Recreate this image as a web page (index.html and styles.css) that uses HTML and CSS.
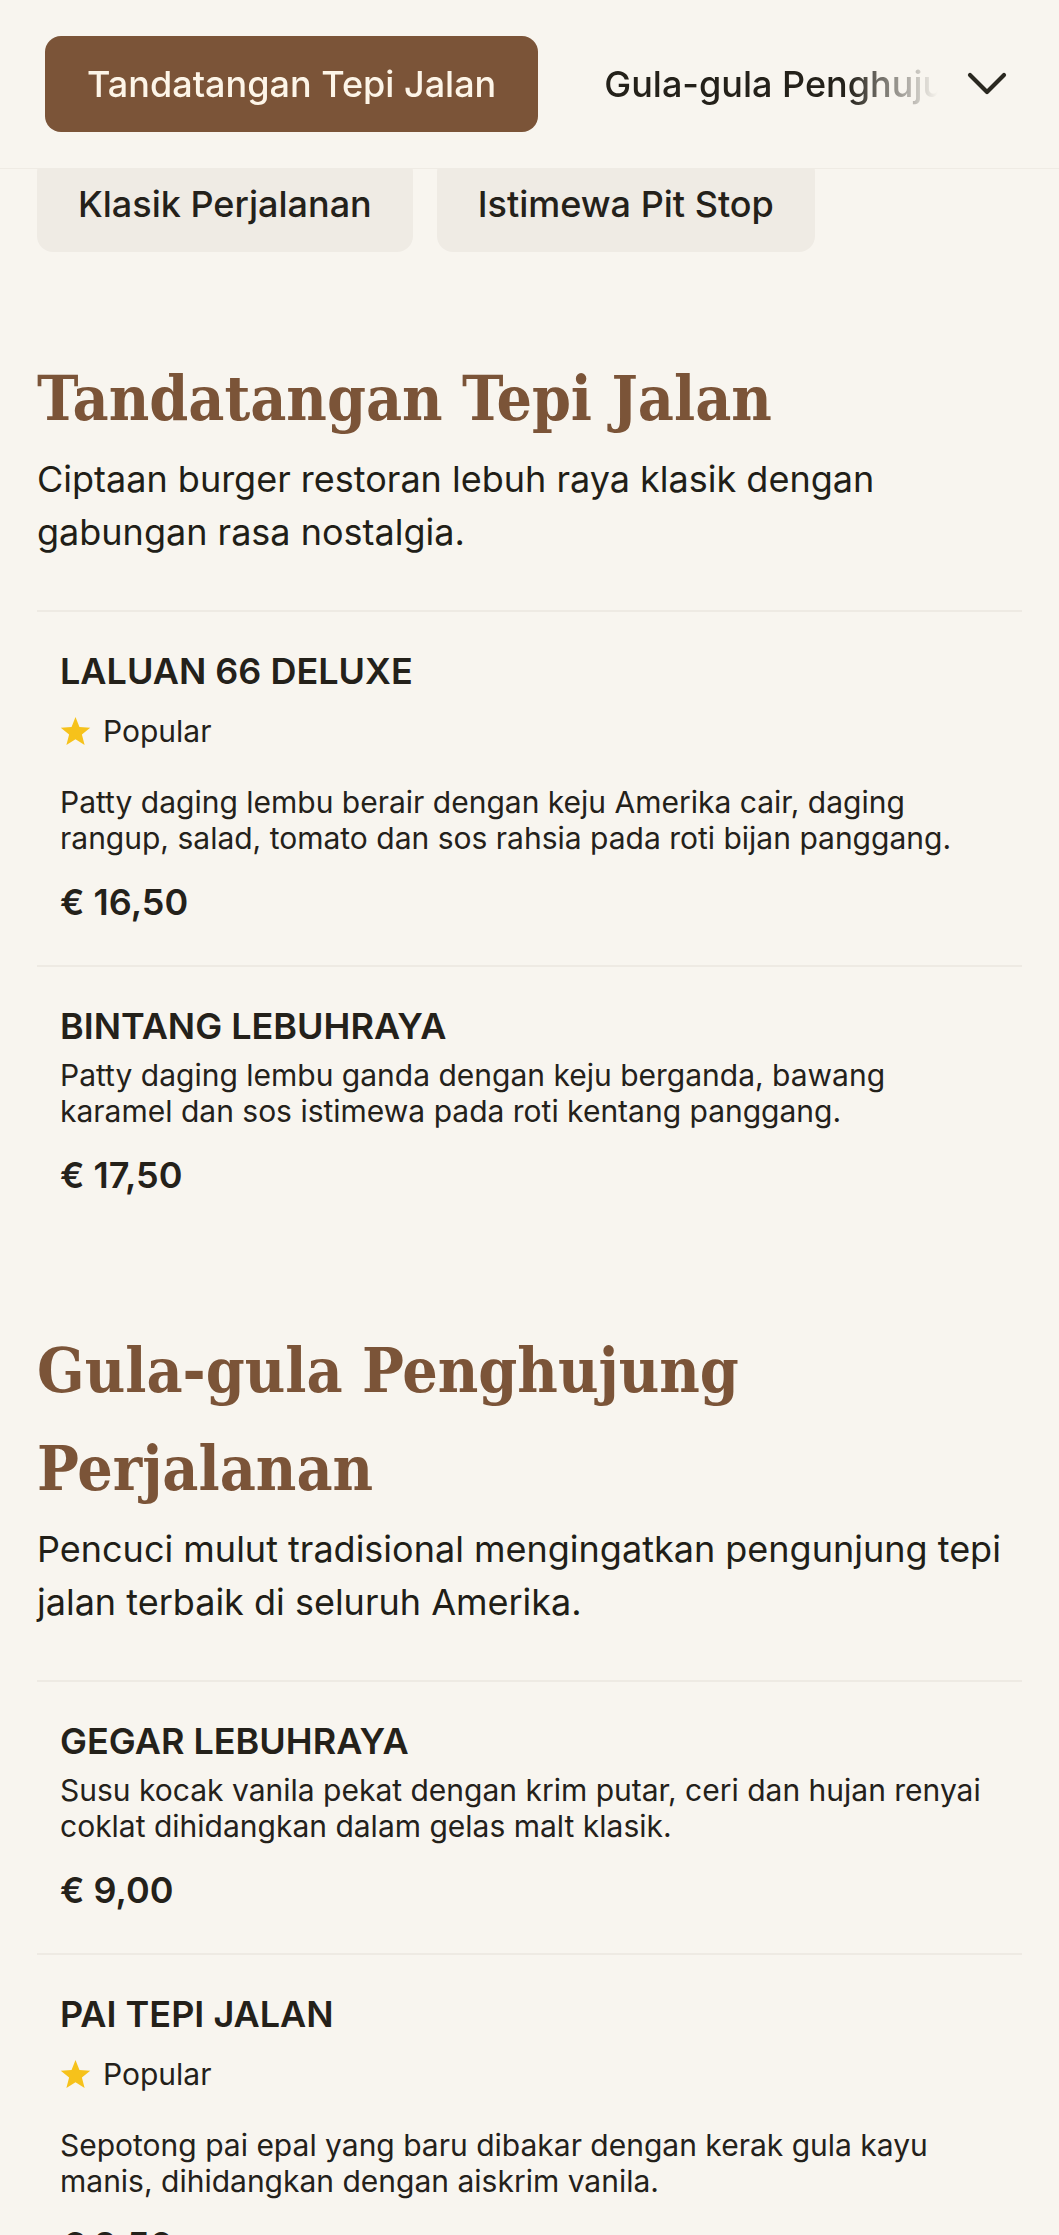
FILE: index.html
```html
<!DOCTYPE html>
<html lang="ms">
<head>
<meta charset="utf-8">
<title>Menu</title>
<link rel="stylesheet" href="styles.css">
</head>
<body>
<header class="topbar">
  <nav class="tabs">
    <a class="tab tab-active" href="#tandatangan">Tandatangan Tepi Jalan</a>
    <a class="tab" href="#gula">Gula-gula Penghujung Perjalanan</a>
  </nav>
  <button class="more" type="button" aria-label="Lagi kategori">
    <svg width="40" height="26" viewBox="0 0 40 26" aria-hidden="true"><polyline points="3,4 20,21 37,4" fill="none" stroke="#2a2820" stroke-width="4.2" stroke-linecap="round" stroke-linejoin="round"/></svg>
  </button>
</header>

<main class="menu">
  <nav class="chips">
    <a class="chip" href="#klasik">Klasik Perjalanan</a>
    <a class="chip" href="#pitstop">Istimewa Pit Stop</a>
  </nav>

  <section class="category" id="tandatangan">
    <h2 class="category-title">Tandatangan Tepi Jalan</h2>
    <p class="category-desc">Ciptaan burger restoran lebuh raya klasik dengan gabungan rasa nostalgia.</p>
    <ul class="items">
      <li class="item">
        <h3 class="item-name">LALUAN 66 DELUXE</h3>
        <div class="item-tag">
          <svg class="star" viewBox="0 0 24 24" aria-hidden="true"><polygon points="12,0.8 15.06,8.59 23.41,9.09 16.95,14.41 19.05,22.51 12,18 4.95,22.51 7.05,14.41 0.59,9.09 8.94,8.59"/></svg>
          <span>Popular</span>
        </div>
        <p class="item-desc">Patty daging lembu berair dengan keju Amerika cair, daging rangup, salad, tomato dan sos rahsia pada roti bijan panggang.</p>
        <p class="item-price">€ 16,50</p>
      </li>
      <li class="item">
        <h3 class="item-name">BINTANG LEBUHRAYA</h3>
        <p class="item-desc">Patty daging lembu ganda dengan keju berganda, bawang karamel dan sos istimewa pada roti kentang panggang.</p>
        <p class="item-price">€ 17,50</p>
      </li>
    </ul>
  </section>

  <section class="category" id="gula">
    <h2 class="category-title">Gula-gula Penghujung Perjalanan</h2>
    <p class="category-desc">Pencuci mulut tradisional mengingatkan pengunjung tepi jalan terbaik di seluruh Amerika.</p>
    <ul class="items">
      <li class="item">
        <h3 class="item-name">GEGAR LEBUHRAYA</h3>
        <p class="item-desc">Susu kocak vanila pekat dengan krim putar, ceri dan hujan renyai coklat dihidangkan dalam gelas malt klasik.</p>
        <p class="item-price">€ 9,00</p>
      </li>
      <li class="item">
        <h3 class="item-name">PAI TEPI JALAN</h3>
        <div class="item-tag">
          <svg class="star" viewBox="0 0 24 24" aria-hidden="true"><polygon points="12,0.8 15.06,8.59 23.41,9.09 16.95,14.41 19.05,22.51 12,18 4.95,22.51 7.05,14.41 0.59,9.09 8.94,8.59"/></svg>
          <span>Popular</span>
        </div>
        <p class="item-desc">Sepotong pai epal yang baru dibakar dengan kerak gula kayu manis, dihidangkan dengan aiskrim vanila.</p>
        <p class="item-price">€ 8,50</p>
      </li>
    </ul>
  </section>
</main>
</body>
</html>
```

FILE: styles.css
```css
* {
  box-sizing: border-box;
}

body {
  margin: 0;
  background: #f8f5ef;
  font-family: Inter, "Noto Sans", sans-serif;
  color: #221f18;
}

/* sticky category bar lying over the scrolled content */
.topbar {
  position: fixed;
  top: 0;
  left: 0;
  right: 0;
  z-index: 10;
  height: 169px;
  display: flex;
  align-items: center;
  padding-left: 45px;
  background: #f8f5ef;
  border-bottom: 1px solid #efebe4;
}

.tabs {
  flex: 1;
  min-width: 0;
  display: flex;
  gap: 24px;
  overflow: hidden;
  -webkit-mask-image: linear-gradient(to right, #000 calc(100% - 92px), transparent calc(100% - 2px));
  mask-image: linear-gradient(to right, #000 calc(100% - 92px), transparent calc(100% - 2px));
}

.tab {
  flex: none;
  display: flex;
  align-items: center;
  height: 96px;
  padding: 0 42px;
  border-radius: 16px;
  font-size: 36px;
  font-weight: 500;
  white-space: nowrap;
  color: #24211a;
  text-decoration: none;
}

.tab-active {
  background: #7b5438;
  color: #fdf5e8;
}

.more {
  flex: none;
  display: flex;
  width: 40px;
  height: 26px;
  margin: 0 52px 0 27px;
  padding: 0;
  border: 0;
  background: none;
}

.menu {
  padding: 156px 37px 0;
}

.chips {
  display: flex;
  gap: 24px;
  margin-bottom: 98px;
}

.chip {
  display: flex;
  align-items: center;
  height: 96px;
  padding: 0 41px;
  border-radius: 16px;
  background: #efebe4;
  font-size: 36px;
  font-weight: 500;
  color: #24211a;
  text-decoration: none;
  white-space: nowrap;
}

.category + .category {
  margin-top: 84px;
}

.category-title {
  margin: 0;
  font-family: "DejaVu Serif Condensed", "DejaVu Serif", serif;
  font-stretch: condensed;
  font-weight: 700;
  font-size: 62px;
  line-height: 98px;
  color: #7b5438;
}

.category-desc {
  margin: 5px 0 51px;
  font-size: 36px;
  line-height: 53px;
  color: #211e17;
}

.items {
  list-style: none;
  margin: 0;
  padding: 0;
}

.item {
  border-top: 2px solid #eeeae3;
  padding: 38px 23px 42px;
}

.item-name {
  margin: 0 0 10px;
  font-size: 36px;
  font-weight: 600;
  line-height: 42px;
  color: #24211a;
}

.item-tag {
  display: flex;
  align-items: center;
  gap: 12px;
  margin: 21px 0 35px;
  font-size: 30px;
  line-height: 36px;
  color: #24211a;
}

.star {
  width: 31px;
  height: 31px;
  fill: #f6c21b;
}

.item-desc {
  margin: 0;
  font-size: 30px;
  line-height: 36px;
  color: #24211a;
}

.item-price {
  margin: 26px 0 0;
  font-size: 36px;
  font-weight: 600;
  line-height: 41px;
  color: #24211a;
}
```
